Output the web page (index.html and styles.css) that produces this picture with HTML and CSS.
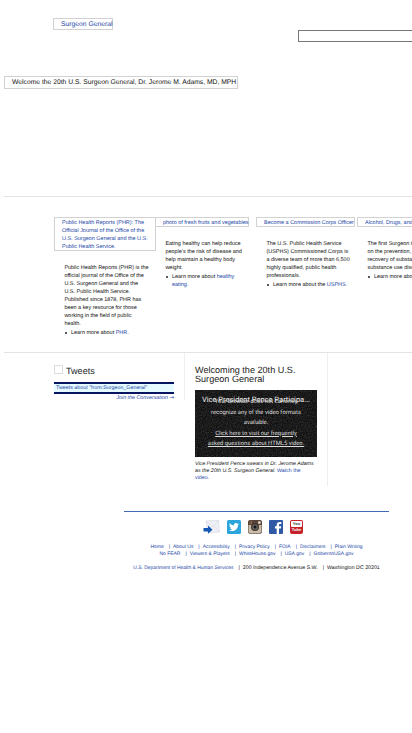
FILE: index.html
```html
<!DOCTYPE html>
<html lang="en">
<head>
<meta charset="utf-8">
<title>Surgeon General</title>
<link rel="stylesheet" href="styles.css">
</head>
<body>
<div class="page">
  <header class="header">
    <a class="alt logo">Surgeon General</a>
    <div class="search"></div>
  </header>
  <section class="hero"><div class="alt welcome">Welcome the 20th U.S. Surgeon General, Dr. Jerome M. Adams, MD, MPH</div></section>

  <section class="features">
    <article class="feature">
      <a class="alt tall">Public Health Reports (PHR): The<br>Official Journal of the Office of the<br>U.S. Surgeon General and the U.S.<br>Public Health Service.</a>
      <p>Public Health Reports (PHR) is the<br>official journal of the Office of the<br>U.S. Surgeon General and the<br>U.S. Public Health Service.<br>Published since 1878, PHR has<br>been a key resource for those<br>working in the field of public<br>health.</p>
      <ul><li>Learn more about <a>PHR.</a></li></ul>
    </article>
    <article class="feature">
      <a class="alt food">photo of fresh fruits and vegetables</a>
      <p>Eating healthy can help reduce<br>people’s the risk of disease and<br>help maintain a healthy body<br>weight.</p>
      <ul><li>Learn more about <a>healthy<br>eating.</a></li></ul>
    </article>
    <article class="feature">
      <a class="alt corps">Become a Commission Corps Officer</a>
      <p>The U.S. Public Health Service<br>(USPHS) Commissioned Corps is<br>a diverse team of more than 6,500<br>highly qualified, public health<br>professionals.</p>
      <ul><li>Learn more about the <a>USPHS.</a></li></ul>
    </article>
    <article class="feature">
      <a class="alt drugs">Alcohol, Drugs, and Health</a>
      <p>The first Surgeon General's report<br>on the prevention, treatment and<br>recovery of substance misuse and<br>substance use disorders.</p>
      <ul><li>Learn more about the report.</li></ul>
    </article>
  </section>

  <section class="media">
    <div class="tweets">
      <h2><span class="icon-box"></span>Tweets</h2>
      <a class="timeline">Tweets about "from:Surgeon_General"</a>
      <a class="join">Join the Conversation <span class="arrow">→</span></a>
    </div>
    <div class="video-col">
      <h2>Welcoming the 20th U.S.<br>Surgeon General</h2>
      <div class="video">
        <svg class="static" width="122" height="67"><filter id="grain"><feTurbulence type="fractalNoise" baseFrequency=".8" numOctaves="2"/><feColorMatrix values="0 0 0 0 1  0 0 0 0 1  0 0 0 0 1  .28 0 0 0 -.09"/></filter><rect width="122" height="67" filter="url(#grain)"/></svg>
        <div class="video-title">Vice President Pence Participa...</div>
        <div class="video-error">Your browser does not currently<br>recognize any of the video formats<br>available.<br><u>Click here to visit our frequently</u><br><u>asked questions about HTML5 video.</u></div>
      </div>
      <p class="caption"><i>Vice President Pence swears in Dr. Jerome Adams<br>as the 20th U.S. Surgeon General.</i> <a>Watch the<br>video.</a></p>
    </div>
  </section>

  <footer class="footer">
    <div class="social">
      <svg class="mail" viewBox="0 0 17 14"><path d="M3 1 15.500 0 16.500 12 5 13Z" fill="#eef0f5" stroke="#ccd1dc" stroke-width=".5"/><path d="M3 1 10 7 15.500 0M5 13 9 6M16.500 12 11 6" fill="none" stroke="#d3d7e2" stroke-width=".5"/><path d="M.5 8H5V5.500L9.500 9.700 5 13.700V11.500H.5Z" fill="#1559b5"/></svg>
      <svg viewBox="0 0 14 14"><rect width="14" height="14" rx="1.500" fill="#2ba5dc"/><path transform="translate(2 2) scale(.417)" fill="#fff" d="M24 4.600a10 10 0 0 1-2.800.8 5 5 0 0 0 2.100-2.700 10 10 0 0 1-3.100 1.200 4.900 4.900 0 0 0-8.400 4.500A14 14 0 0 1 1.700 3.200a4.900 4.900 0 0 0 1.500 6.500 5 5 0 0 1-2.200-.6c0 2.400 1.600 4.500 3.900 4.900a5 5 0 0 1-2.200.1 4.900 4.900 0 0 0 4.600 3.400A10 10 0 0 1 0 19.500a14 14 0 0 0 21.500-12.400A10 10 0 0 0 24 4.600Z"/></svg>
      <svg viewBox="0 0 14 14"><rect width="14" height="14" rx="2.500" fill="#c9bcab"/><path d="M0 5V2.500Q0 0 2.500 0H11.500Q14 0 14 2.500V5Z" fill="#5b4438"/><path d="M2 0V4.500M3.500 0V4.500" stroke="#967352" stroke-width=".7"/><rect x="10" y="1.300" width="2.700" height="2.500" rx=".4" fill="#ded6ce"/><circle cx="7" cy="7" r="4" fill="#413832"/><circle cx="7" cy="7" r="2.600" fill="#867d76"/><circle cx="7" cy="7" r="1.700" fill="#17191e"/><rect x=".3" y=".3" width="13.400" height="13.400" rx="2.300" fill="none" stroke="#554238" stroke-width=".6"/></svg>
      <svg viewBox="0 0 14 14"><rect width="14" height="14" rx="1" fill="#3059a5"/><path d="M7.700 14V8.500H6V6.300H7.700V4.800C7.700 2.800 8.900 1.900 10.700 1.900H12.300V4H11.100C10.200 4 10 4.400 10 5.100V6.300H12.200L11.900 8.500H10V14Z" fill="#fff"/></svg>
      <div class="youtube"><span>You</span><b>Tube</b></div>
    </div>
    <nav class="row r1"><a>Home</a><a>About Us</a><a>Accessibility</a><a>Privacy Policy</a><a>FOIA</a><a>Disclaimers</a><a>Plain Writing</a></nav>
    <nav class="row r2"><a>No FEAR</a><a>Viewers &amp; Players</a><a>WhiteHouse.gov</a><a>USA.gov</a><a>GobiernoUSA.gov</a></nav>
    <div class="row r3"><a>U.S. Department of Health &amp; Human Services</a><span>200 Independence Avenue S.W.</span><span>Washington DC 20201</span></div>
  </footer>
</div>
</body>
</html>
```
FILE: styles.css
```css
* { box-sizing: border-box; }
body { margin: 0; background: #fff; }
.page {
  width: 412px; height: 733px; overflow: hidden;
  font: 5.480px/8px "Liberation Sans", Arial, sans-serif;
  color: #111; white-space: nowrap; text-rendering: geometricPrecision;
}
h2, p, ul { margin: 0; padding: 0; font-weight: normal; }
a { color: #1c46a6; }
.alt { display: block; border: 1px solid #d2d2d2; padding-left: 7px; }
.header { display: flex; height: 76px; }
.logo { margin: 18px 0 0 53px; width: 60px; height: 12px; font-size: 6.750px; line-height: 11px; }
.search { margin: 30px 0 0 185px; width: 130px; height: 12px; border: 1px solid #777; flex: none; }
.hero { height: 121px; margin-left: 4px; border-bottom: 1px solid #e4e4e4; }
.welcome { width: 234px; height: 13px; font-size: 6.750px; line-height: 11px; }

.features { display: flex; margin-left: 54px; height: 155px; padding-top: 20px; }
.feature { width: 101px; flex: none; }
.feature .alt { height: 10px; width: 94px; line-height: 10px; }
.feature .tall { height: 34px; width: 102px; line-height: 8px; padding-top: .5px; }
.feature .corps { width: 99px; }
.feature .drugs { width: 101px; }
.feature p { margin: 12.500px 0 0 10.400px; }
.feature ul { margin: 1px 0 0 17px; list-style: none; }
.feature li { position: relative; }
.feature li::before { content: ""; position: absolute; left: -6px; top: 3px; width: 2px; height: 2px; border-radius: 50%; background: #222; }

.media { display: flex; height: 159px; margin-left: 4px; border-top: 1px solid #e4e4e4; }
.tweets { width: 181px; height: 47px; padding: 12px 11px 0 50px; border-right: 1px solid #eee; }
h2 { font-size: 9.100px; line-height: 9px; color: #222; }
.tweets h2 { display: flex; height: 17px; line-height: 12px; }
.icon-box { width: 9px; height: 9px; border: 1px solid #ddd; margin-right: 3px; }
.timeline { display: block; width: 120px; height: 12px; border: solid #07145f; border-width: 2px 0; background: #e5fbff; padding-left: 2px; font-size: 5.330px; }
.join { display: block; width: 120px; text-align: right; font-style: italic; font-size: 5.330px; line-height: 8px; }
.arrow { font-family: "DejaVu Sans", sans-serif; font-size: 5.500px; line-height: 1; font-style: normal; }
.video-col { width: 143px; height: 133px; padding: 13px 0 0 10px; border-right: 1px solid #eee; }
.video { margin-top: 6px; width: 122px; height: 67px; background: #0f0f0f; color: #ddd; font-family: Roboto, sans-serif; display: grid; text-align: center; overflow: hidden; }
.static, .video-title, .video-error { grid-area: 1 / 1; }
.video-title { font-size: 7.500px; line-height: 10px; padding-top: 5px; color: #eee; }
.video-error { font-size: 5.850px; line-height: 10.500px; padding-top: 7px; }
.caption { font-size: 5.250px; line-height: 7px; padding-top: 3.500px; }

.footer { width: 265px; margin-left: 124px; border-top: 1px solid #4169b5; text-align: center; font-size: 4.960px; }
.social { display: flex; gap: 7px; margin: 8px 0 0 79px; height: 16px; }
.social svg { width: 14px; height: 14px; }
.social .mail { width: 17px; height: 14px; }
.youtube { width: 13px; height: 14px; border-radius: 2px; background: #c62229; color: #fff; font-size: 4px; line-height: 6px; display: flex; flex-direction: column; padding: 1px; }
.youtube span { background: #fff; color: #333; border-radius: 1px; font-weight: bold; }
.row { display: flex; justify-content: center; line-height: 7px; }
.row > * + *::before { content: "|"; color: #1c46a6; margin: 0 3px 0 5px; }
.r1 { margin-top: 8px; }
.r3 { margin-top: 7px; font-size: 5.250px; }
.r3 a { font-size: 4.940px; }
.r3 > * + *::before { color: #222; }
```
